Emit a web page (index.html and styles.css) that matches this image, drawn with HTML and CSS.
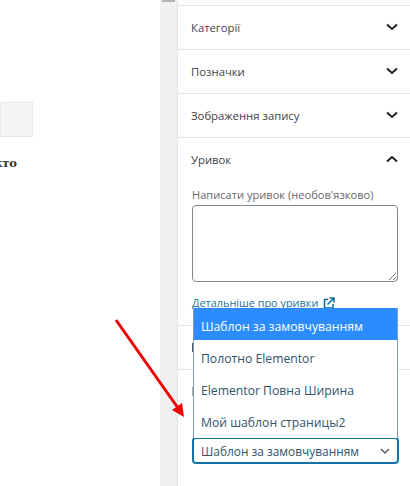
FILE: index.html
```html
<!DOCTYPE html>
<html lang="en">
<head>
    <meta charset="UTF-8">
    <title>Шаблон запису</title>
    <link rel="stylesheet" href="styles.css">
</head>
<body>
    <div class="page">
        <div class="editor">
            <div class="editorBox"></div>
            <div class="editorText"><span>кто</span></div>
        </div>
        <div class="scrollBar"><div class="scrollThumb"></div></div>
        <div class="sidebar">
            <div class="panel panelTop"></div>
            <div class="panel panelClosed">
                <span class="panelTitle">Категорії</span>
                <svg class="chevron" viewBox="0 0 12 8"><path d="M1 1.500l5 4.500 5-4.500"/></svg>
            </div>
            <div class="panel panelClosed">
                <span class="panelTitle">Позначки</span>
                <svg class="chevron" viewBox="0 0 12 8"><path d="M1 1.500l5 4.500 5-4.500"/></svg>
            </div>
            <div class="panel panelClosed">
                <span class="panelTitle">Зображення запису</span>
                <svg class="chevron" viewBox="0 0 12 8"><path d="M1 1.500l5 4.500 5-4.500"/></svg>
            </div>
            <div class="panel panelOpen">
                <div class="panelHead">
                    <span class="panelTitle">Уривок</span>
                    <svg class="chevron" viewBox="0 0 12 8"><path d="M1 6.500l5-4.500 5 4.500"/></svg>
                </div>
                <div class="fieldLabel">Написати уривок (необов'язково)</div>
                <div class="fakeTextarea">
                    <svg class="resizer" viewBox="0 0 9 9"><path d="M1 8l7-7M5 8l3-3"/></svg>
                </div>
                <div class="moreLink">
                    <a href="#">Детальніше про уривки</a>
                    <svg class="extIcon" viewBox="0 0 12 12"><path d="M5 2.500H1.500v8.500h8.500V7"/><path d="M4.500 7.500L10.500 1.500M6.500 1h4.500v4.500"/></svg>
                </div>
            </div>
            <div class="panel panelClosed"><div class="peekMark"></div></div>
            <div class="panel panelLast">
                <div class="peekMark peekGrey"></div>
                <div class="selectBox">
                    <span>Шаблон за замовчуванням</span>
                    <svg class="selectArrow" viewBox="0 0 10 6"><path d="M1 1l4 4 4-4"/></svg>
                </div>
            </div>
            <ul class="dropdown">
                <li class="selected">Шаблон за замовчуванням</li>
                <li>Полотно Elementor</li>
                <li>Elementor Повна Ширина</li>
                <li>Мой шаблон страницы2</li>
            </ul>
        </div>
        <svg class="redArrow" viewBox="0 0 100 120">
            <path d="M16 10L78 98"/>
            <polygon points="72,100 82,93 84,107"/>
        </svg>
    </div>
</body>
</html>
```

FILE: styles.css
```css
html, body {
  margin: 0;
  height: 100%;
  overflow: hidden;
  background-color: #fff;
}
.page {
  display: flex;
  position: relative;
  width: 410px;
  height: 486px;
  font-family: "Open Sans", "Noto Sans", sans-serif;
  color: #3c434a;
}
.editor {
  width: 160px;
  padding-top: 102px;
  overflow: hidden;
  box-sizing: border-box;
}
.editorBox {
  width: 33px;
  height: 35px;
  box-sizing: border-box;
  background-color: #f5f5f5;
  border: 1px solid #e9e9e9;
}
.editorText {
  display: flex;
  justify-content: flex-end;
  width: 17px;
  margin-top: 18px;
  font-family: "DejaVu Serif", serif;
  font-size: 11.500px;
  font-weight: 700;
  line-height: 16px;
  white-space: nowrap;
  color: #333;
}
.scrollBar {
  width: 17px;
  background-color: #f0f0f0;
  flex-shrink: 0;
}
.scrollThumb {
  width: 13px;
  height: 2px;
  margin-left: 2px;
  background-color: #b5b5b5;
}
.sidebar {
  position: relative;
  flex: 1;
  border-left: 1px solid #e2e4e7;
}
.panel {
  border-bottom: 1px solid #e2e4e7;
  font-size: 11.300px;
  box-sizing: border-box;
}
.panelTop {
  height: 6px;
}
.panelClosed {
  display: flex;
  align-items: center;
  justify-content: space-between;
  height: 44px;
  padding: 0 12px 0 14px;
}
.panelOpen {
  height: 188px;
  padding: 0 12px 0 14px;
}
.panelHead {
  display: flex;
  align-items: center;
  justify-content: space-between;
  height: 43px;
}
.panelTitle {
  margin-left: -1px;
}
.chevron {
  width: 12px;
  height: 8px;
  margin-bottom: 2px;
  fill: none;
  stroke: #1e1e1e;
  stroke-width: 1.900;
}
.fieldLabel {
  height: 16px;
  line-height: 16px;
  margin-top: 6px;
  color: #646970;
  font-size: 11.100px;
}
.fakeTextarea {
  display: flex;
  align-items: flex-end;
  justify-content: flex-end;
  height: 77px;
  margin-top: 2px;
  box-sizing: border-box;
  border: 1px solid #7e8993;
  border-radius: 4px;
}
.resizer {
  width: 9px;
  height: 9px;
  fill: none;
  stroke: #555;
  stroke-width: 0.800;
}
.moreLink {
  display: flex;
  align-items: center;
  gap: 5px;
  margin-top: 13px;
  font-size: 10.900px;
  line-height: 16px;
}
.moreLink a {
  color: #21759b;
}
.extIcon {
  width: 12px;
  height: 12px;
  fill: none;
  stroke: #0a6c9c;
  stroke-width: 1.500;
}
.peekMark {
  width: 1px;
  height: 9px;
  background-color: #4a5a66;
}
.peekGrey {
  background-color: #a9adb1;
  margin-bottom: 42px;
}
.panelLast {
  border-bottom: none;
  padding: 17px 12px 0 14px;
}
.selectBox {
  display: flex;
  align-items: center;
  justify-content: space-between;
  height: 25px;
  width: 205px;
  margin-left: 1px;
  padding: 0 7px 0 7px;
  box-sizing: border-box;
  background-color: #fff;
  border: 1px solid #1272a5;
  box-shadow: 0 0 0 1px #1272a5;
  border-radius: 3px;
  font-size: 11.900px;
  color: #32546a;
}
.selectArrow {
  width: 10px;
  height: 6px;
  fill: none;
  stroke: #555;
  stroke-width: 1.400;
}
.dropdown {
  position: absolute;
  left: 15px;
  top: 308px;
  width: 205px;
  height: 130px;
  margin: 0;
  padding: 0;
  list-style: none;
  box-sizing: border-box;
  background-color: #fff;
  border: 1px solid #7f9db9;
  border-top: none;
  border-bottom: none;
  font-size: 12.200px;
  color: #32546a;
}
.dropdown li {
  display: flex;
  align-items: center;
  height: 32px;
  padding: 4px 0 0 7px;
  box-sizing: border-box;
}
.dropdown .selected {
  background-color: #2b8cff;
  color: #fff;
}
.redArrow {
  position: absolute;
  left: 100px;
  top: 310px;
  width: 100px;
  height: 120px;
  fill: #f00000;
}
.redArrow path {
  stroke: #f00000;
  stroke-width: 3;
}
```
